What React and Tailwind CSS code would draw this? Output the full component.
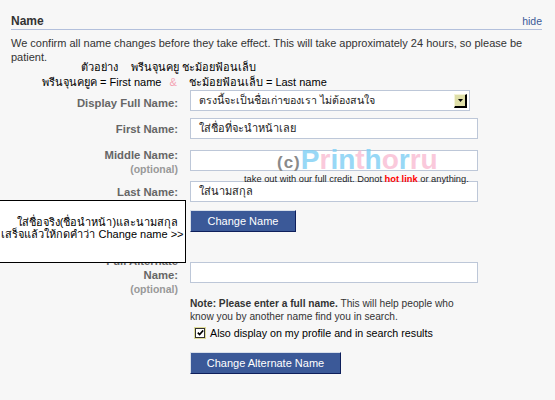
import React from 'react'

const font = { fontFamily: '"Liberation Sans", Tahoma, sans-serif' }

function Label({ children, optional, className = '' }) {
  return (
    <div className={`w-[167px] shrink-0 text-right font-bold text-[#666] text-[11.3px] leading-[14px] ${className}`}>
      {children}
      {optional && <div className="text-[#999] text-[10.5px]">(optional)</div>}
    </div>
  )
}

function TextBox({ value }) {
  return (
    <div className="w-[288px] h-[21px] bg-white border border-[#bdc7d8] pl-[8px] text-[11px] leading-[19px] text-[#222] whitespace-nowrap">
      {value}
    </div>
  )
}

function BlueButton({ children, w }) {
  return (
    <button className={`${w} h-[22px] bg-[#3b5998] text-white text-[11px] leading-[20px] border border-t-[#d8dfea] border-l-[#d8dfea] border-r-[#0e1f5b] border-b-[#0e1f5b]`}>
      {children}
    </button>
  )
}

export default function App() {
  return (
    <div className="relative w-[555px] h-[400px] bg-[#f7f7f7] text-[#333] overflow-hidden" style={font}>
      <div className="pl-[11px] pr-[13px] pt-[14px]">
        {/* header */}
        <div className="flex justify-between items-center h-[16px] border-b border-[#b3c0dc]">
          <h2 className="font-bold text-[12px] leading-[14px] text-[#333] -mt-[2px]">Name</h2>
          <a className="text-[10.5px] leading-[14px] text-[#3b5998] -mt-[2px]">hide</a>
        </div>
        <p className="mt-[6px] text-[11px] leading-[14px] w-[515px]">
          We confirm all name changes before they take effect. This will take approximately 24 hours, so please be patient.
        </p>

        {/* thai sample */}
        <div className="-mt-[4px] text-[11px] leading-[14px] text-black whitespace-nowrap">
          <div className="pl-[70px] flex">
            <span className="w-[50px]">ตัวอย่าง</span>
            <span className="w-[51px]">พรีนจุนคยู</span>
            <span>ชะม้อยฟ้อนเล็บ</span>
          </div>
          <div className="pl-[31px] mt-[1px] flex">
            <span>พรีนจุนคยูค = First name</span>
            <span className="text-[#f4a3b3] ml-[8px] mr-[12px]">&amp;</span>
            <span>ชะม้อยฟ้อนเล็บ = Last name</span>
          </div>
        </div>

        <div className="mt-[1px] flex flex-col">
          <div className="flex h-[21px] gap-[12px]">
            <Label className="mt-[6px]">Display Full Name:</Label>
            <div className="w-[280px] h-[21px] bg-white border border-[#bdc7d8] flex items-center justify-between pl-[8px] pr-[2px] text-[10.7px] text-[#222] whitespace-nowrap">
              <span>ตรงนี้จะเป็นชื่อเก่าของเรา ไม่ต้องสนใจ</span>
              <span className="w-[13px] h-[14px] bg-[#dedea8] border-t border-l border-t-[#f4f4d8] border-l-[#f4f4d8] border-r-[2px] border-b-[2px] border-r-black border-b-black flex items-center justify-center">
                <svg width="5" height="3" viewBox="0 0 5 3"><path d="M0 0h5L2.5 3z" fill="#000" /></svg>
              </span>
            </div>
          </div>

          <div className="flex h-[21px] gap-[12px] mt-[7px]">
            <Label className="mt-[4px]">First Name:</Label>
            <TextBox value="ใส่ชื่อที่จะนำหน้าเลย" />
          </div>

          <div className="flex h-[21px] gap-[12px] mt-[11px]">
            <Label optional className="-mt-[2px]">Middle Name:</Label>
            <TextBox value="" />
          </div>

          <div className="flex h-[21px] gap-[12px] mt-[10px]">
            <Label className="mt-[4px]">Last Name:</Label>
            <TextBox value="ใส่นามสกุล" />
          </div>

          <div className="flex gap-[12px] mt-[8px]">
            <div className="w-[167px] shrink-0" />
            <BlueButton w="w-[106px]">Change Name</BlueButton>
          </div>

          <div className="flex h-[21px] gap-[12px] mt-[30px]">
            <Label optional className="-mt-[8px]">
              <div>Full Alternate</div>
              <div>Name:</div>
            </Label>
            <TextBox value="" />
          </div>

          <div className="ml-[179px] mt-[14px] text-[10.2px] leading-[13px] w-[290px] text-[#333]">
            <span className="font-bold">Note: Please enter a full name.</span> This will help people who know you by another name find you in search.
          </div>
          <label className="ml-[183px] mt-[3px] h-[14px] flex items-center gap-[4px] text-[10.7px] text-black">
            <span className="w-[12px] h-[12px] border border-[#e0dc98] bg-[#e0dc98] flex">
              <span className="flex-1 bg-white border border-[#333] flex items-center justify-center">
                <svg width="7" height="6" viewBox="0 0 7 6"><path d="M0.8 2.6l1.8 2 3.6-4.2" stroke="#000" strokeWidth="1.6" fill="none" /></svg>
              </span>
            </span>
            Also display on my profile and in search results
          </label>
          <div className="ml-[179px] mt-[10px]">
            <BlueButton w="w-[151px]">Change Alternate Name</BlueButton>
          </div>
        </div>
      </div>

      {/* watermark */}
      <div className="absolute left-[277px] top-[145px] flex items-end whitespace-nowrap">
        <span className="text-[17px] font-bold text-[#8a8a8a] leading-[20px] tracking-[1px] mb-[2px]">(c)</span>
        <span className="text-[28px] leading-[30px] font-bold opacity-80">
          <span className="text-[#7fcff5]">P</span>
          <span className="text-[#f9bcd3]">r</span>
          <span className="text-[#7fcff5]">in</span>
          <span className="text-[#f9bcd3]">t</span>
          <span className="text-[#7fcff5]">h</span>
          <span className="text-[#f9bcd3]">o</span>
          <span className="text-[#7fcff5]">r</span>
          <span className="text-[#f9bcd3]">ru</span>
        </span>
      </div>
      <div className="absolute left-[244px] top-[173px] text-[9.3px] leading-[12px] text-[#222] whitespace-nowrap">
        take out with our full credit. Donot <span className="text-[#f00] font-bold">hot link</span> or anything.
      </div>

      {/* note box */}
      <div className="absolute left-[-1px] top-[200px] w-[187px] h-[63px] bg-white border border-black pt-[15px] text-center text-[11px] leading-[12px] text-black whitespace-nowrap">
        <div className="pl-[10px]">ใส่ชื่อจริง(ชื่อนำหน้า)และนามสกุล</div>
        <div>เสร็จแล้วให้กดคำว่า Change name &gt;&gt;</div>
      </div>
    </div>
  )
}
